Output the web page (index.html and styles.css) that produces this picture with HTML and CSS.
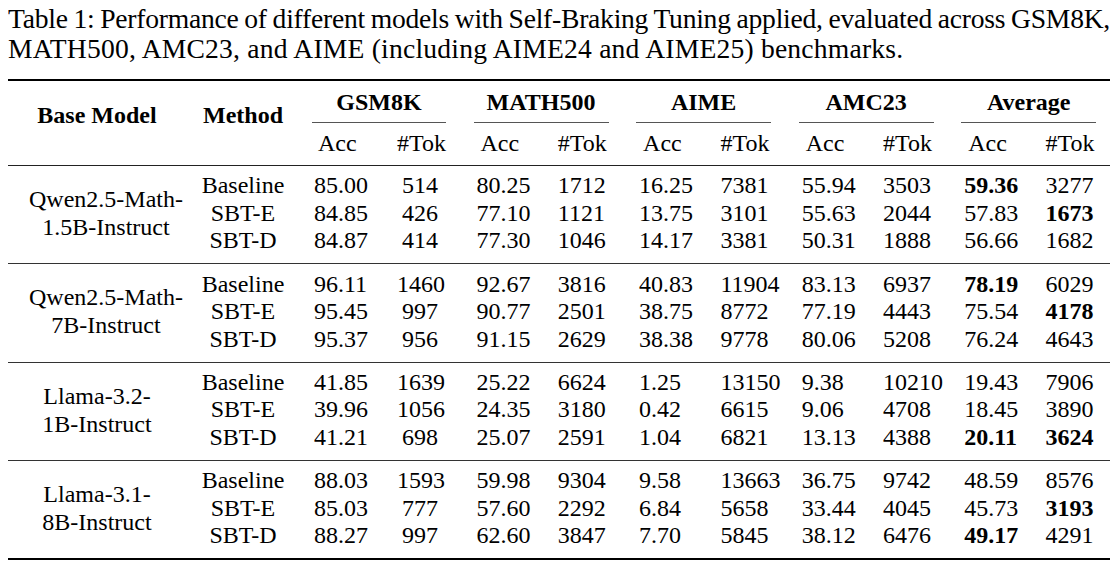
FILE: index.html
```html
<!DOCTYPE html>
<html lang="en">
<head>
<meta charset="utf-8">
<title>Table 1</title>
<link rel="stylesheet" href="styles.css">
</head>
<body>
<p class="caption"><span class="cap-line cap-full">Table 1: Performance of different models with Self-Braking Tuning applied, evaluated across GSM8K,</span><span class="cap-line cap-last">MATH500, AMC23, and AIME (including AIME24 and AIME25) benchmarks.</span></p>
<div class="results">
  <div class="thead">
    <div class="hmain">Base Model</div>
    <div class="hmain">Method</div>
    <div class="grp grp-gsm">GSM8K</div>
    <div class="grp">MATH500</div>
    <div class="grp">AIME</div>
    <div class="grp">AMC23</div>
    <div class="grp">Average</div>
    <div class="sub acc gacc">Acc</div><div class="sub gtok">#Tok</div>
    <div class="sub acc">Acc</div><div class="sub">#Tok</div>
    <div class="sub acc">Acc</div><div class="sub">#Tok</div>
    <div class="sub acc">Acc</div><div class="sub">#Tok</div>
    <div class="sub acc">Acc</div><div class="sub">#Tok</div>
  </div>

  <div class="group">
    <div class="model qwen">Qwen2.5-Math-<br>1.5B-Instruct</div>
    <div class="method">Baseline</div><div class="gacc">85.00</div><div class="gtok">514</div><div>80.25</div><div>1712</div><div>16.25</div><div>7381</div><div>55.94</div><div>3503</div><div class="best">59.36</div><div>3277</div>
    <div class="method">SBT-E</div><div class="gacc">84.85</div><div class="gtok">426</div><div>77.10</div><div>1121</div><div>13.75</div><div>3101</div><div>55.63</div><div>2044</div><div>57.83</div><div class="best">1673</div>
    <div class="method">SBT-D</div><div class="gacc">84.87</div><div class="gtok">414</div><div>77.30</div><div>1046</div><div>14.17</div><div>3381</div><div>50.31</div><div>1888</div><div>56.66</div><div>1682</div>
  </div>

  <div class="group">
    <div class="model qwen">Qwen2.5-Math-<br>7B-Instruct</div>
    <div class="method">Baseline</div><div class="gacc">96.11</div><div class="gtok">1460</div><div>92.67</div><div>3816</div><div>40.83</div><div>11904</div><div>83.13</div><div>6937</div><div class="best">78.19</div><div>6029</div>
    <div class="method">SBT-E</div><div class="gacc">95.45</div><div class="gtok">997</div><div>90.77</div><div>2501</div><div>38.75</div><div>8772</div><div>77.19</div><div>4443</div><div>75.54</div><div class="best">4178</div>
    <div class="method">SBT-D</div><div class="gacc">95.37</div><div class="gtok">956</div><div>91.15</div><div>2629</div><div>38.38</div><div>9778</div><div>80.06</div><div>5208</div><div>76.24</div><div>4643</div>
  </div>

  <div class="group">
    <div class="model">Llama-3.2-<br>1B-Instruct</div>
    <div class="method">Baseline</div><div class="gacc">41.85</div><div class="gtok">1639</div><div>25.22</div><div>6624</div><div>1.25</div><div>13150</div><div>9.38</div><div>10210</div><div>19.43</div><div>7906</div>
    <div class="method">SBT-E</div><div class="gacc">39.96</div><div class="gtok">1056</div><div>24.35</div><div>3180</div><div>0.42</div><div>6615</div><div>9.06</div><div>4708</div><div>18.45</div><div>3890</div>
    <div class="method">SBT-D</div><div class="gacc">41.21</div><div class="gtok">698</div><div>25.07</div><div>2591</div><div>1.04</div><div>6821</div><div>13.13</div><div>4388</div><div class="best">20.11</div><div class="best">3624</div>
  </div>

  <div class="group">
    <div class="model">Llama-3.1-<br>8B-Instruct</div>
    <div class="method">Baseline</div><div class="gacc">88.03</div><div class="gtok">1593</div><div>59.98</div><div>9304</div><div>9.58</div><div>13663</div><div>36.75</div><div>9742</div><div>48.59</div><div>8576</div>
    <div class="method">SBT-E</div><div class="gacc">85.03</div><div class="gtok">777</div><div>57.60</div><div>2292</div><div>6.84</div><div>5658</div><div>33.44</div><div>4045</div><div>45.73</div><div class="best">3193</div>
    <div class="method">SBT-D</div><div class="gacc">88.27</div><div class="gtok">997</div><div>62.60</div><div>3847</div><div>7.70</div><div>5845</div><div>38.12</div><div>6476</div><div class="best">49.17</div><div>4291</div>
  </div>
</div>
</body>
</html>
```

FILE: styles.css
```css
body {
  margin: 8px;
  background: #ffffff;
  color: #000000;
  font-family: "Times New Roman", Tinos, "Liberation Serif", serif;
}

.caption {
  margin: -4px 0 15px;
  width: 1102px;
  font-size: 27.6px;
  line-height: 30px;
}

.cap-line {
  display: block;
  text-align: left;
}

.cap-full {
  text-align: justify;
  text-align-last: justify;
  word-spacing: -2px;
  letter-spacing: -0.25px;
}

.cap-last {
  letter-spacing: 0.2px;
}

/* table built from grids */
.results {
  width: 1102px;
  border-top: 2px solid #000;
  border-bottom: 2px solid #000;
  font-family: "Times New Roman", Tinos, "Liberation Serif", serif;
  font-size: 24px;
  line-height: 28px;
}

.thead,
.group {
  display: grid;
  grid-template-columns: 178px 114px 97px 79.5px repeat(7, 81.3px) 64.4px;
}

.thead {
  grid-template-rows: 42px 42px;
  border-bottom: 1px solid #222;
}

.hmain {
  grid-row: span 2;
  font-weight: bold;
  text-align: center;
  padding-top: 20px;
}

.grp {
  grid-column: span 2;
  align-self: start;
  justify-self: start;
  width: 135px;
  height: 42px;
  box-sizing: border-box;
  margin-left: -3px;
  padding-top: 7px;
  font-weight: bold;
  text-align: center;
  border-bottom: 1px solid #555;
}

.grp-gsm {
  width: 134px;
  margin-left: 12px;
}

.sub {
  padding-top: 6px;
}

.sub.acc {
  padding-left: 4px;
}

.sub.gacc {
  padding-left: 18px;
}

.group {
  grid-template-rows: repeat(3, 27.6px);
  padding: 5.3px 0 9.2px;
  border-bottom: 1px solid #333;
}

.group:last-child {
  border-bottom: 0;
}

.model {
  grid-row: span 3;
  align-self: center;
  text-align: center;
  padding-top: 1px;
}

.model.qwen {
  padding-left: 18px;
}

.method {
  text-align: center;
}

.gacc {
  padding-left: 14px;
}

.gtok {
  text-align: center;
  padding-right: 33.5px;
}

.best {
  font-weight: bold;
}
```
